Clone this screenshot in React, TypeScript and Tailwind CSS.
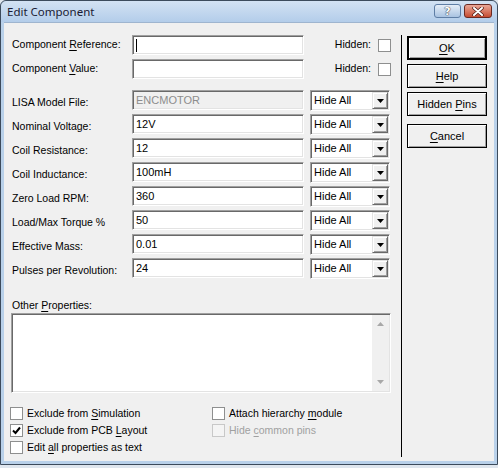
import React from "react";

const sunken =
  "border border-t-[#a0a0a0] border-l-[#a0a0a0] border-r-white border-b-white shadow-[inset_1px_1px_0_#696969,inset_-1px_-1px_0_#e3e3e3]";
const raisedSmall =
  "border border-t-[#e3e3e3] border-l-[#e3e3e3] border-b-[#696969] border-r-[#696969] shadow-[inset_1px_1px_0_#fff,inset_-1px_-1px_0_#a0a0a0]";

function U({ children }: { children: React.ReactNode }) {
  return <span className="underline underline-offset-[2px]">{children}</span>;
}

function Select() {
  return (
    <div className={`ml-[6px] w-[80px] h-[21px] bg-white flex items-center pl-[3px] text-[11px] ${sunken}`}>
      <span>Hide All</span>
      <div className={`ml-auto mr-[1px] w-[16px] h-[17px] bg-[#f0f0f0] flex items-center justify-center ${raisedSmall}`}>
        <svg width="7" height="4" viewBox="0 0 7 4">
          <path d="M0 0H7L3.5 4Z" fill="#000" />
        </svg>
      </div>
    </div>
  );
}

function Field({ label, value, disabled }: { label: React.ReactNode; value: string; disabled?: boolean }) {
  return (
    <div className="flex h-[21px] items-start">
      <div className="w-[120px] pt-[6px] leading-[13px]">{label}</div>
      <div
        className={`w-[172px] h-[20px] flex items-center pl-[3px] text-[11px] ${sunken} ${
          disabled ? "bg-[#f0f0f0] text-[#8d8d8d]" : "bg-white"
        }`}
      >
        {value}
      </div>
      <Select />
    </div>
  );
}

function Check({ label, checked, disabled }: { label: React.ReactNode; checked?: boolean; disabled?: boolean }) {
  return (
    <div className={`flex items-center h-[17px] ${disabled ? "text-[#a0a0a0]" : ""}`}>
      <div
        className={`w-[13px] h-[13px] border flex items-center justify-center ${
          disabled ? "border-[#c8c8c8] bg-[#f4f4f4]" : "border-[#8e8f8f] bg-white"
        }`}
      >
        {checked && (
          <svg width="9" height="9" viewBox="0 0 9 9">
            <path d="M1 4.5L3.5 7L8 1.5" stroke="#000" strokeWidth="2" fill="none" />
          </svg>
        )}
      </div>
      <span className="ml-[4px]">{label}</span>
    </div>
  );
}

function Btn({ children, def }: { children: React.ReactNode; def?: boolean }) {
  return (
    <div
      className={`w-[80px] h-[24px] bg-[#f0f0f0] flex items-center justify-center text-[11px] ${
        def ? "border-2" : "border"
      } border-black shadow-[inset_1px_1px_0_#fff,inset_-1px_-1px_0_#a0a0a0]`}
    >
      <span>{children}</span>
    </div>
  );
}

export default function App() {
  return (
    <div className="w-[498px] h-[468px] bg-[#dfe6ee] overflow-hidden font-['Liberation_Sans',Arial,sans-serif] text-[10.5px] text-black">
      <div className="w-[498px] h-[465px] bg-[#b9d1ea] border border-[#3c4b5c] rounded-t-[6px] flex flex-col">
        {/* title bar */}
        <div className="h-[21px] flex items-center bg-gradient-to-b from-[#d3e2f3] to-[#b3cdea] rounded-t-[6px] relative">
          <span className="ml-[6px] font-['Noto_Sans',sans-serif] text-[11.5px] text-[#1a1a33] leading-none">
            Edit Component
          </span>
          <div className="ml-auto mr-[5px] mt-[3px] flex gap-[3px] self-start">
            <div className="w-[27px] h-[14px] rounded-[3px] border border-[#5f7ea5] bg-gradient-to-b from-[#e6eef8] to-[#a9c3e1] flex items-center justify-center">
              <span className="font-['DejaVu_Sans',sans-serif] font-bold text-[11px] leading-none text-white [text-shadow:0_0_1px_#223,0_0_1px_#223]">
                ?
              </span>
            </div>
            <div className="w-[28px] h-[14px] rounded-[3px] border border-[#6a2a22] bg-gradient-to-b from-[#e9a797] to-[#c54a30] flex items-center justify-center">
              <svg width="12" height="9" viewBox="0 0 12 9">
                <path d="M2 1L10 8M10 1L2 8" stroke="#4a1a14" strokeWidth="3.4" strokeLinecap="round" />
                <path d="M2 1L10 8M10 1L2 8" stroke="#fff" strokeWidth="2" strokeLinecap="round" />
              </svg>
            </div>
          </div>
        </div>

        {/* client */}
        <div className="flex-1 mx-[3px] mb-[3px] bg-[#f0f0f0] flex border-t border-[#9fb5cf]">
          {/* left column */}
          <div className="w-[387px] pl-[8px] pt-[12px] flex flex-col">
            <div className="flex h-[20px] items-center">
              <div className="w-[120px]">
                Component <U>R</U>eference:
              </div>
              <div className={`w-[172px] h-[20px] bg-white flex items-center pl-[3px] ${sunken}`}>
                <div className="w-[1px] h-[13px] bg-black" />
              </div>
              <div className="ml-auto flex items-center">
                <span>Hidden:</span>
                <div className="ml-[7px] w-[13px] h-[13px] border border-[#8e8f8f] bg-white" />
              </div>
            </div>
            <div className="flex h-[20px] items-center mt-[4px]">
              <div className="w-[120px]">
                Component <U>V</U>alue:
              </div>
              <div className={`w-[172px] h-[20px] bg-white ${sunken}`} />
              <div className="ml-auto flex items-center">
                <span>Hidden:</span>
                <div className="ml-[7px] w-[13px] h-[13px] border border-[#8e8f8f] bg-white" />
              </div>
            </div>

            <div className="mt-[11px] flex flex-col gap-[3px]">
              <Field label="LISA Model File:" value="ENCMOTOR" disabled />
              <Field label="Nominal Voltage:" value="12V" />
              <Field label="Coil Resistance:" value="12" />
              <Field label="Coil Inductance:" value="100mH" />
              <Field label="Zero Load RPM:" value="360" />
              <Field label="Load/Max Torque %" value="50" />
              <Field label="Effective Mass:" value="0.01" />
              <Field label="Pulses per Revolution:" value="24" />
            </div>

            <div className="mt-[20px] leading-[13px]">
              Other <U>P</U>roperties:
            </div>
            <div className={`mt-[1px] ml-[-1px] w-[380px] h-[80px] bg-white flex ${sunken}`}>
              <div className="ml-auto mr-[1px] my-[1px] w-[17px] bg-[#f0f0f0] flex flex-col items-center justify-between py-[7px]">
                <svg width="7" height="4" viewBox="0 0 7 4">
                  <path d="M0 4H7L3.5 0Z" fill="#a8a8a8" />
                </svg>
                <svg width="7" height="4" viewBox="0 0 7 4">
                  <path d="M0 0H7L3.5 4Z" fill="#a8a8a8" />
                </svg>
              </div>
            </div>

            <div className="mt-[12px] ml-[-2px] flex">
              <div className="w-[202px] flex flex-col">
                <Check label={<>Exclude from <U>S</U>imulation</>} />
                <Check label={<>Exclude from PCB <U>L</U>ayout</>} checked />
                <Check label={<>Edit <U>a</U>ll properties as text</>} />
              </div>
              <div className="flex flex-col">
                <Check label={<>Attach hierarchy <U>m</U>odule</>} />
                <Check label={<>Hide <U>c</U>ommon pins</>} disabled />
              </div>
            </div>
          </div>

          {/* separator */}
          <div className="ml-[10px] mt-[12px] w-[1px] h-[422px] bg-black" />

          {/* buttons */}
          <div className="ml-[5px] mt-[13px] flex flex-col">
            <Btn def>
              <U>O</U>K
            </Btn>
            <div className="mt-[4px]">
              <Btn>
                <U>H</U>elp
              </Btn>
            </div>
            <div className="mt-[4px]">
              <Btn>
                Hidden <U>P</U>ins
              </Btn>
            </div>
            <div className="mt-[8px]">
              <Btn>
                <U>C</U>ancel
              </Btn>
            </div>
          </div>
        </div>
      </div>
    </div>
  );
}
